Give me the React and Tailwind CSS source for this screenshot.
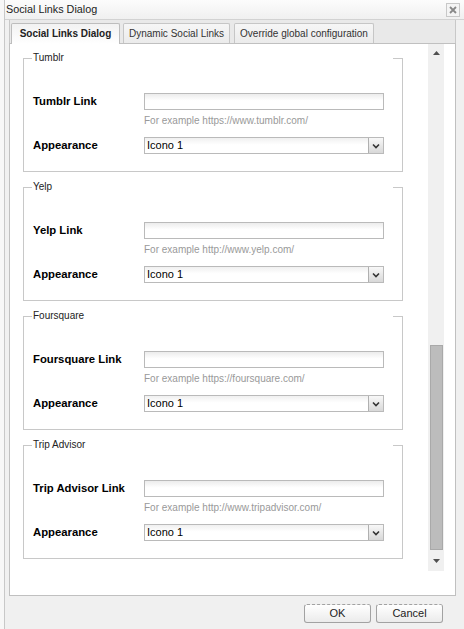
import React from 'react';

const sections = [
  { name: 'Tumblr', link: 'Tumblr Link', hint: 'For example https://www.tumblr.com/' },
  { name: 'Yelp', link: 'Yelp Link', hint: 'For example http://www.yelp.com/' },
  { name: 'Foursquare', link: 'Foursquare Link', hint: 'For example https://foursquare.com/' },
  { name: 'Trip Advisor', link: 'Trip Advisor Link', hint: 'For example http://www.tripadvisor.com/' },
];

const Chevron = () => (
  <svg width="8" height="6" viewBox="0 0 8 6">
    <path d="M1 1.5 L4 4.5 L7 1.5" fill="none" stroke="#333" strokeWidth="1.6" />
  </svg>
);

const LinkFieldset = ({ name, link, hint }) => (
  <fieldset className="w-[380px] border border-[#c8c8c8] pl-[8px] pb-[17px] mb-[9px]">
    <legend className="w-[361px] pl-px text-[10px] leading-[12px] text-[#222]">{name}</legend>
    <div className="pl-px pt-[29px]">
      {/* link row */}
      <div className="flex items-center h-[17px]">
        <span className="w-[111px] font-bold text-[11.3px] text-black">{link}</span>
        <div className="w-[240px] h-[17px] border border-[#bababa] bg-linear-to-b from-[#ececec] to-white to-[45%]" />
      </div>
      <div className="ml-[111px] mt-[5px] text-[10px] leading-[12px] text-[#999]">{hint}</div>
      {/* appearance row */}
      <div className="flex items-center h-[17px] mt-[10px]">
        <span className="w-[111px] font-bold text-[11.3px] text-black">Appearance</span>
        <div className="w-[240px] h-[17px] flex border border-[#bababa] bg-linear-to-b from-[#f0f0f0] to-white to-[45%]">
          <span className="flex-1 pl-[2px] text-[11px] leading-[15px] text-black">Icono 1</span>
          <span className="w-[15px] h-full border-l border-[#b0b0b0] bg-linear-to-b from-[#f8f8f8] to-[#d8d8d8] flex items-center justify-center">
            <Chevron />
          </span>
        </div>
      </div>
    </div>
  </fieldset>
);

export default function App() {
  return (
    <div className="w-[464px] h-[629px] bg-[#f7f7f7] font-['Liberation_Sans',Arial,sans-serif] overflow-hidden">
      <div className="ml-[4px] h-full border-l border-[#c8c8c8] flex flex-col">
        {/* Title bar */}
        <div className="h-[20px] border-b border-[#d2d2d2] bg-linear-to-b from-[#fcfcfc] to-[#f0f0f0] flex items-center justify-between pl-[1px] pr-[4px]">
          <span className="text-[10.8px] text-[#222]">Social Links Dialog</span>
          <button className="w-[14px] h-[14px] border border-[#c8c8c8] bg-[#f4f4f4] flex items-center justify-center">
            <svg width="8" height="8" viewBox="0 0 8 8">
              <path d="M1 1 L7 7 M7 1 L1 7" stroke="#888" strokeWidth="1.8" />
            </svg>
          </button>
        </div>

        {/* Body */}
        <div className="flex-1 flex flex-col bg-[#f0f0f0] pl-[4px]">
          {/* Tabs */}
          <div className="w-[447px] h-[23px] bg-[#e9e9e9] border-x border-[#c8c8c8] flex items-end pl-px">
            <div className="relative z-10 w-[109px] h-[21px] -mb-px border border-b-0 border-[#bdbdbd] rounded-t-[2px] bg-linear-to-b from-[#f2f2f2] to-white flex items-center justify-center pb-px text-[10px] font-bold text-[#222]">
              Social Links Dialog
            </div>
            <div className="ml-[3px] w-[107px] h-[20px] border border-b-0 border-[#c6c6c6] rounded-t-[2px] bg-linear-to-b from-[#f6f6f6] to-[#ebebeb] flex items-center justify-center text-[10px] text-[#333]">
              Dynamic Social Links
            </div>
            <div className="ml-[4px] w-[140px] h-[20px] border border-b-0 border-[#c6c6c6] rounded-t-[2px] bg-linear-to-b from-[#f6f6f6] to-[#ebebeb] flex items-center justify-center text-[10px] text-[#333]">
              Override global configuration
            </div>
          </div>

          {/* Panel */}
          <div className="w-[447px] h-[553px] border border-[#c0c0c0] bg-white flex">
            <div className="flex-1 pl-[13px] pt-[8px]">
              {sections.map((s) => (
                <LinkFieldset key={s.name} {...s} />
              ))}
            </div>
            {/* Scrollbar */}
            <div className="w-[16px] h-[527px] mr-[11px] bg-[#f0f0f0] flex flex-col">
              <div className="h-[17px] flex items-center justify-center">
                <svg width="7" height="4" viewBox="0 0 7 4">
                  <path d="M0 4 L3.5 0 L7 4 Z" fill="#505050" />
                </svg>
              </div>
              <div className="flex-1 flex flex-col justify-end items-center">
                <div className="w-[13px] h-[205px] bg-[#bcbcbc] border border-[#a9a9a9]" />
              </div>
              <div className="h-[21px] flex items-center justify-center">
                <svg width="7" height="4" viewBox="0 0 7 4">
                  <path d="M0 0 L7 0 L3.5 4 Z" fill="#505050" />
                </svg>
              </div>
            </div>
          </div>

          {/* Footer */}
          <div className="flex justify-end gap-[5px] pt-[8px] pr-[21px]">
            <button className="w-[67px] h-[19px] rounded-[3px] border border-[#a2a2a2] [border-top-style:dashed] bg-linear-to-b from-white to-[#ebebeb] text-[11px] text-[#222]">
              OK
            </button>
            <button className="w-[67px] h-[19px] rounded-[3px] border border-[#a2a2a2] [border-top-style:dashed] bg-linear-to-b from-white to-[#ebebeb] text-[11px] text-[#222]">
              Cancel
            </button>
          </div>
        </div>
      </div>
    </div>
  );
}
